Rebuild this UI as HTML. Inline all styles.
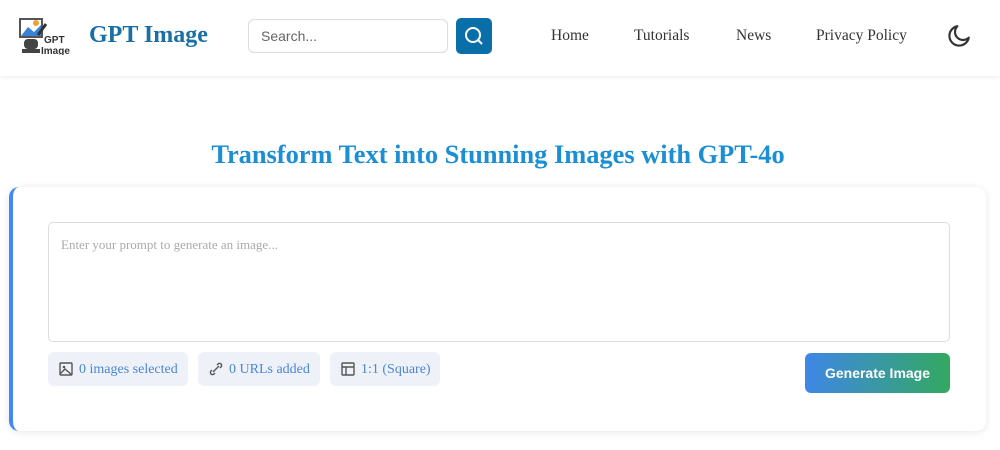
<!DOCTYPE html>
<html><head><meta charset="utf-8"><style>
*{box-sizing:border-box;margin:0;padding:0}
body{width:1000px;height:450px;background:#fff;font-family:"Liberation Serif",serif;overflow:hidden;position:relative}
.hdr{position:absolute;left:0;top:0;width:1000px;height:76px;background:#fff;box-shadow:0 2px 4px rgba(0,0,0,.06)}
.brand{position:absolute;left:89px;top:22px;font-size:24px;font-weight:bold;color:#1a6fa5}
.search{position:absolute;left:248px;top:19px;width:200px;height:34px;border:1px solid #dcdcdc;border-radius:6px;font-family:"Liberation Sans",sans-serif;font-size:14px;color:#666;padding:8px 12px}
.sbtn{position:absolute;left:456px;top:18px;width:36px;height:36px;background:#0a6fa8;border-radius:5px}
.nav{position:absolute;top:27px;font-size:15.5px;color:#333;white-space:nowrap}
h1{position:absolute;left:0;width:996px;top:139px;text-align:center;font-size:26.4px;color:#1a8fd6;font-weight:bold}
.card{position:absolute;left:9px;top:187px;width:977px;height:244px;border-radius:10px;background:#fff;box-shadow:0 1px 8px rgba(0,0,0,.1);border-left:4px solid #4287f5}
.ta{position:absolute;left:48px;top:222px;width:902px;height:120px;border:1px solid #ddd;border-radius:5px;padding:14px 12px;font-size:13px;color:#aaa}
.chip{position:absolute;top:352px;height:34px;background:#eef2f8;border-radius:6px;font-size:14px;color:#4a86d8;padding:10px 0 0 31px;white-space:nowrap}
.chip svg{position:absolute;left:11px;top:10px}
.gen{position:absolute;left:805px;top:353px;width:145px;height:40px;border-radius:6px;background:linear-gradient(90deg,#3f87e6,#33a860);color:#fff;font-family:"Liberation Sans",sans-serif;font-weight:bold;font-size:14px;text-align:center;line-height:40px}
</style></head><body>
<div class="hdr">
<svg style="position:absolute;left:18px;top:17px" width="52" height="38" viewBox="0 0 52 38">
<rect x="2" y="2" width="22" height="18" fill="none" stroke="#555" stroke-width="2"/>
<path d="M3 19 L10 10 L16 15 L23 8 V19Z" fill="#3b82d6"/><circle cx="18" cy="6" r="3" fill="#f0a030"/>
<path d="M20 18 L28 7" stroke="#333" stroke-width="3"/>
<rect x="6" y="22" width="14" height="10" rx="4" fill="#444"/><rect x="4" y="32" width="18" height="4" fill="#444"/>
<text x="26" y="26" font-family="Liberation Sans" font-weight="bold" font-size="10" fill="#333">GPT</text>
<text x="23" y="37" font-family="Liberation Sans" font-weight="bold" font-size="10" fill="#333">Image</text>
</svg>
<div class="brand">GPT Image</div>
<div class="search">Search...</div>
<div class="sbtn"><svg width="36" height="36" viewBox="0 0 36 36"><circle cx="17" cy="17" r="7" fill="none" stroke="#fff" stroke-width="2"/><path d="M22 22l4 4" stroke="#fff" stroke-width="2"/></svg></div>
<div class="nav" style="left:551px">Home</div>
<div class="nav" style="left:634px">Tutorials</div>
<div class="nav" style="left:736px">News</div>
<div class="nav" style="left:816px">Privacy Policy</div>
<svg style="position:absolute;left:946px;top:23px" width="26" height="26" viewBox="0 0 24 24"><path d="M21 13.5A9 9 0 1 1 10.5 3a7 7 0 0 0 10.5 10.5z" fill="none" stroke="#333" stroke-width="2" stroke-linejoin="round"/></svg>
</div>
<h1>Transform Text into Stunning Images with GPT-4o</h1>
<div class="card"></div>
<div class="ta">Enter your prompt to generate an image...</div>
<div class="chip" style="left:48px;width:140px"><svg width="14" height="14" viewBox="0 0 14 14"><rect x="1" y="1" width="12" height="12" rx="1" fill="none" stroke="#555" stroke-width="1.4"/><circle cx="5" cy="5" r="1.3" fill="#555"/><path d="M1 12l5-5 7 6" fill="none" stroke="#555" stroke-width="1.4"/></svg>0 images selected</div>
<div class="chip" style="left:198px;width:122px"><svg width="14" height="14" viewBox="0 0 14 14"><path d="M4 10l6-6M3 8l-1 1a2 2 0 0 0 3 3l1-1M8 3l1-1a2 2 0 0 1 3 3l-1 1" fill="none" stroke="#555" stroke-width="1.4"/></svg>0 URLs added</div>
<div class="chip" style="left:330px;width:110px"><svg width="14" height="14" viewBox="0 0 14 14"><rect x="1" y="1" width="12" height="12" rx="1" fill="none" stroke="#555" stroke-width="1.4"/><path d="M1 5h12M5 5v8" stroke="#555" stroke-width="1.4"/></svg>1:1 (Square)</div>
<div class="gen">Generate Image</div>
</body></html>
